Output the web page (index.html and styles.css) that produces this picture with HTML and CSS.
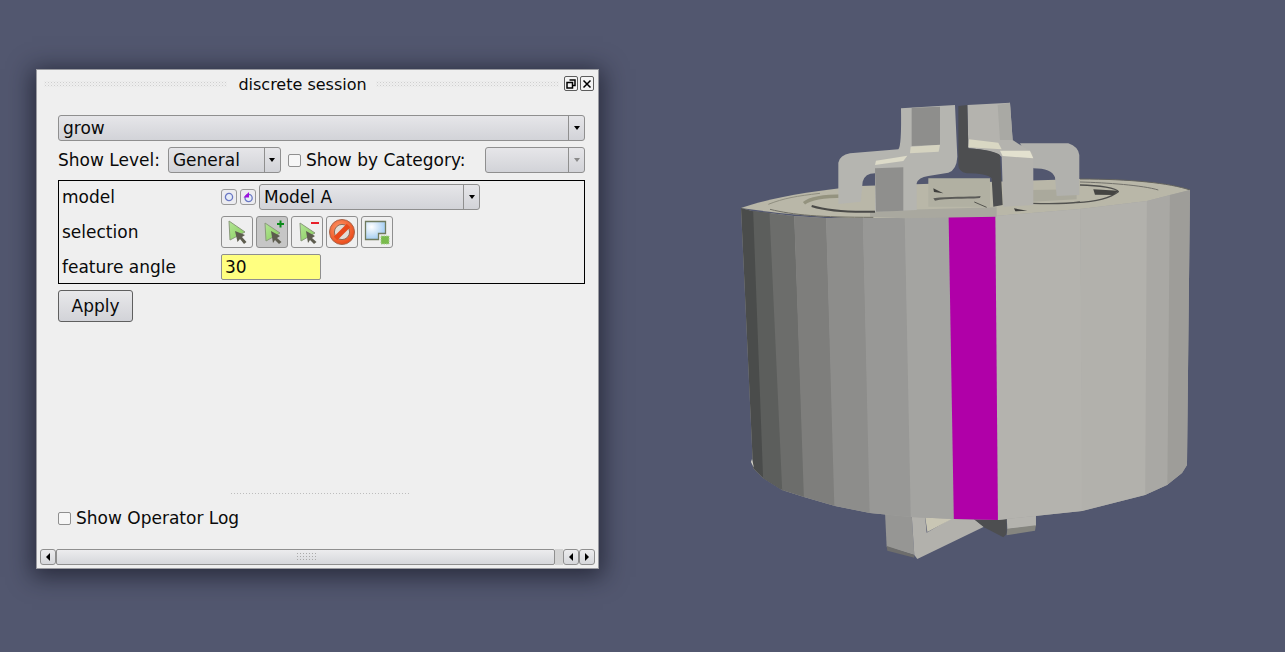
FILE: index.html
```html
<!DOCTYPE html>
<html lang="en">
<head>
<meta charset="utf-8">
<title>discrete session</title>
<link rel="stylesheet" href="styles.css">
</head>
<body>
<svg class="scene" viewBox="0 0 1285 652" xmlns="http://www.w3.org/2000/svg" aria-hidden="true">
  <defs>
    <clipPath id="bodyclip">
      <path d="M741 208L752 211L769 213L794 216L825 218L862 218L904 218L948 217L995 216L1080 209L1147 201L1170 195L1190 190L1187 465L1182 473L1167 485L1145 495L1082 511L998 520L954 519L911 517L870 513L835 506L804 497L782 490L763 478L753 468Z"/>
    </clipPath>
  </defs>
  <!-- feet below the body (coordinates in 3x crop space) -->
  <g transform="translate(730 440) scale(.3333)">
    <path d="M465 215L545 222L553 345L470 320Z" fill="#969694"/>
    <path d="M470 318L553 345V353L472 332Z" fill="#6d6d6c"/>
    <path d="M545 222L585 225L590 278L670 232H725L762 260L562 357L553 345Z" fill="#b2b1ac"/>
    <path d="M585 225L675 232L592 276Z" fill="#c9c6b4"/>
    <path d="M725 232L830 225V282L820 292L762 262Z" fill="#4d4e50"/>
    <path d="M830 225L918 220V258L832 268Z" fill="#b4b3ae"/>
    <path d="M832 266L918 256L915 272L830 286Z" fill="#85857f"/>
  </g>
  <!-- top face -->
  <path d="M741 208C770 198 810 191 860 186L1080 179C1130 179 1170 183 1190 190C1160 204 1090 214 995 217L900 219C840 219 780 214 741 208Z" fill="#b9b7a8"/>
  <path d="M1080 179C1130 179 1170 183 1190 190" fill="none" stroke="#62625e"/>
  <!-- facets -->
  <g clip-path="url(#bodyclip)">
    <path d="M700 180H1200V540H700Z" fill="#a3a3a0"/>
    <path d="M730 180H769L782 530H742Z" fill="#4a4c4b"/>
    <path d="M752 180H769L786 530H765Z" fill="#5c5e5c"/>
    <path d="M768 180H793L806 530H784Z" fill="#6c6d6b"/>
    <path d="M793 180H825L836 530H805Z" fill="#7e7e7c"/>
    <path d="M825 180H862L871 530H835Z" fill="#8d8d8b"/>
    <path d="M862 180H904L912 530H870Z" fill="#989896"/>
    <path d="M904 180H950L955 530H911Z" fill="#a4a4a1"/>
    <path d="M995 180H1080L1083 530H998Z" fill="#b4b3ae"/>
    <path d="M1080 180H1148L1146 530H1082Z" fill="#b2b1ac"/>
    <path d="M1147 180H1171L1168 530H1145Z" fill="#a9a8a4"/>
    <path d="M1170 180H1200L1197 530H1167Z" fill="#9e9d99"/>
    <path d="M948 180H995L998 530H954Z" fill="#b000a8"/>
  </g>
  <path d="M752 459L754 468L751 462Z" fill="#d8d6c8"/>
  <!-- rings on the top face (coordinates in 3x crop space) -->
  <g transform="translate(730 170) scale(.3333)" fill="none">
    <path d="M420 122L800 112L800 140L520 145L420 140Z" fill="#a9a89f"/>
    <path d="M115 103C160 85 200 78 270 70" stroke="#8f8e80" stroke-width="3"/>
    <path d="M120 118C190 135 270 142 430 142" stroke="#6e6d64" stroke-width="3"/>
    <path d="M222 100C240 85 290 78 340 78" stroke="#94937f" stroke-width="10"/>
    <path d="M245 108C290 122 360 127 435 125" stroke="#4a4a48" stroke-width="6"/>
    <path d="M1050 36C1130 38 1240 46 1285 60" stroke="#71706a" stroke-width="3"/>
    <path d="M1050 45C1110 46 1160 55 1165 65C1140 85 1090 95 1040 98" stroke="#4f4f4d" stroke-width="4"/>
    <path d="M1090 58L1165 62L1150 75L1095 74Z" fill="#444442"/>
    <path d="M905 100C960 102 1020 100 1050 96" stroke="#52524f" stroke-width="4"/>
    <path d="M905 60L1040 58L1040 88L905 95Z" fill="#aaa99c"/>
    <path d="M595 25H780V110H595Z" fill="#b1b0a2"/>
    <path d="M610 55L640 70L612 66Z" fill="#3f3f3d"/>
    <path d="M610 85C660 78 710 82 752 78L750 84C700 88 650 84 615 92Z" fill="#5b5b58"/>
    <path d="M733 96L770 112" stroke="#54544f" stroke-width="3"/>
    <path d="M852 115L892 122L856 124Z" fill="#3f3f3d"/>
  </g>
  <!-- prongs (coordinates in 3x crop space) -->
  <g transform="translate(820 90) scale(.3333)">
    <path d="M600 160H745Q775 170 778 195V315L710 318L705 262Q695 235 640 235Z" fill="#b1b1ad"/>
    <path d="M55 342V218Q60 195 90 190L235 178Q245 170 243 55L405 45L412 200Q410 240 385 248L325 258Q295 262 290 280V360L165 365V250Q135 250 128 275L122 335Z" fill="#b5b5b0"/>
    <path d="M275 53L360 50V165L275 168Z" fill="#8e8e8c"/>
    <path d="M272 170L360 164L356 185L270 190Z" fill="#d5d3c0"/>
    <path d="M165 235L250 232V362L168 365Z" fill="#8f8f8d"/>
    <path d="M168 212L262 197L250 213L165 225Z" fill="#dcdac8"/>
    <path d="M442 45L570 38L578 150L640 190V345L550 350L545 200Q520 180 445 175Z" fill="#b4b3ae"/>
    <path d="M533 45L570 38L578 150H540Z" fill="#a9a9a4"/>
    <path d="M415 48L442 45L445 175Q520 180 540 195L548 345L520 350L515 265Q500 250 440 250Q415 245 415 225Z" fill="#4d4e50"/>
    <path d="M447 148L535 158L545 178L445 172Z" fill="#d9d7c3"/>
    <path d="M540 182L630 182L640 205L548 198Z" fill="#e3e1cf"/>
  </g>
</svg>

<section class="window">
  <header class="titlebar">
    <span class="grip"></span>
    <span class="title">discrete session</span>
    <span class="grip"></span>
    <span class="title-buttons">
      <span class="title-btn">
        <svg width="10" height="10" viewBox="0 0 10 10"><path d="M3.500 1H9V6.500H7M1 3.500H6.500V9H1Z" fill="none" stroke="#000" stroke-width="1.500"/></svg>
      </span>
      <span class="title-btn">
        <svg width="10" height="10" viewBox="0 0 10 10"><path d="M1.500 1.500L8.500 8.500M8.500 1.500L1.500 8.500" fill="none" stroke="#000" stroke-width="1.500"/></svg>
      </span>
    </span>
  </header>

  <div class="body">
    <div class="combo combo-full"><span class="combo-text">grow</span><span class="combo-arrow"><i class="down"></i></span></div>

    <div class="level-row">
      <span>Show Level:</span>
      <div class="combo combo-level"><span class="combo-text">General</span><span class="combo-arrow"><i class="down"></i></span></div>
      <span class="check-label"><span class="checkbox"></span>Show by Category:</span>
      <div class="combo combo-cat"><span class="combo-text"></span><span class="combo-arrow"><i class="down muted"></i></span></div>
    </div>

    <div class="params">
      <div class="param-row row-model">
        <span class="param-label">model</span>
        <span class="mini-btn">
          <svg width="12" height="12" viewBox="0 0 12 12"><circle cx="6" cy="6" r="3.600" fill="#e6ecf8" stroke="#6a78c4" stroke-width="1.300"/></svg>
        </span>
        <span class="mini-btn">
          <svg width="12" height="12" viewBox="0 0 12 12"><circle cx="6.600" cy="7" r="3.600" fill="#e6ecf8" stroke="#6a78c4" stroke-width="1.300"/><path d="M1.500 6.500L7 1V6.500Z" fill="#a010e0"/></svg>
        </span>
        <div class="combo combo-model"><span class="combo-text">Model A</span><span class="combo-arrow"><i class="down"></i></span></div>
      </div>

      <div class="param-row row-selection">
        <span class="param-label">selection</span>
        <span class="tool-btn">
          <svg width="24" height="24" viewBox="0 0 24 24"><defs><linearGradient id="greenfill" x1="0" y1="0" x2="1" y2="1"><stop offset="0" stop-color="#b4e696"/><stop offset="1" stop-color="#86cc5c"/></linearGradient></defs><path d="M4 1L20 12L5 20Z" fill="url(#greenfill)" stroke="#8b9a7c"/><path d="M10 11L20 15L17 17L21.500 22L19 24L15 19L12.500 22Z" fill="#5d5c4e"/></svg>
        </span>
        <span class="tool-btn is-on">
          <svg width="24" height="24" viewBox="0 0 24 24"><path d="M5 3L20 13L6 21Z" fill="url(#greenfill)" stroke="#8b9a7c"/><path d="M11 11L20 16L17 18L21.500 22L19 24L15 20L13 23Z" fill="#5d5c4e"/><path d="M17 4H24M20.500 .5V7.500" stroke="#0a8a1a" stroke-width="2"/></svg>
        </span>
        <span class="tool-btn">
          <svg width="24" height="24" viewBox="0 0 24 24"><path d="M5 3L20 13L6 21Z" fill="url(#greenfill)" stroke="#8b9a7c"/><path d="M11 11L20 16L17 18L21.500 22L19 24L15 20L13 23Z" fill="#5d5c4e"/><path d="M16 3H24" stroke="#e8202a" stroke-width="2"/></svg>
        </span>
        <span class="tool-btn">
          <svg width="26" height="26" viewBox="0 0 26 26"><defs><radialGradient id="stopfill" cx=".4" cy=".35" r=".75"><stop offset="0" stop-color="#ff9a6a"/><stop offset="1" stop-color="#e8400f"/></radialGradient></defs><circle cx="13" cy="13" r="12.500" fill="url(#stopfill)" stroke="#a8654a"/><circle cx="13" cy="13" r="7.600" fill="#e2ddd6" stroke="#8c6a58"/><path d="M6.500 19.500L19.500 6.500" stroke="#e8481a" stroke-width="5"/></svg>
        </span>
        <span class="tool-btn">
          <svg width="26" height="26" viewBox="0 0 26 26"><defs><radialGradient id="boxfill" cx=".3" cy=".3" r=".9"><stop offset="0" stop-color="#fff"/><stop offset="1" stop-color="#8cc0ee"/></radialGradient></defs><path d="M1.500 2.500H21.500V14.500H14.500V20.500H1.500Z" fill="url(#boxfill)" stroke="#6f7a5e" stroke-width="1.300"/><rect x="17" y="17" width="8" height="8" fill="#79bb4c" stroke="#a8cf90" stroke-dasharray="1.500 1"/></svg>
        </span>
      </div>

      <div class="param-row row-angle">
        <span class="param-label">feature angle</span>
        <span class="field">30</span>
      </div>
    </div>

    <button class="apply" type="button">Apply</button>

    <div class="spacer"></div>
    <div class="splitter"></div>

    <label class="check-label log-row"><span class="checkbox"></span>Show Operator Log</label>
  </div>

  <div class="scrollbar">
    <span class="sb-btn"><i class="left"></i></span>
    <span class="sb-track"><span class="sb-dots"></span></span>
    <span class="sb-gap"></span>
    <span class="sb-btn"><i class="left"></i></span>
    <span class="sb-btn"><i class="right"></i></span>
  </div>
</section>
</body>
</html>
```
FILE: styles.css
```css
html, body {
  margin: 0;
  height: 100%;
  overflow: hidden;
  background: #52576f;
}

body {
  position: relative;
  font-family: "DejaVu Sans", sans-serif;
  font-size: 16px;
  color: #0a0a0a;
}

.scene {
  position: absolute;
  left: 0;
  top: 0;
  width: 1285px;
  height: 652px;
}

.window {
  position: absolute;
  left: 36px;
  top: 69px;
  width: 561px;
  height: 498px;
  display: flex;
  flex-direction: column;
  background: #efefef;
  border: 1px solid #9a9ba1;
  box-shadow: 0 4px 22px 4px rgba(20, 22, 35, .66);
}

.titlebar {
  height: 29px;
  padding: 0 4px 0 7px;
  display: flex;
  align-items: center;
  flex: none;
}

.title {
  font-size: 16px;
  padding: 0 9px 0 11px;
  white-space: nowrap;
}

.grip {
  flex: 1;
  height: 6px;
  margin-top: -1px;
  background-image:
    radial-gradient(circle, #cfcfcf .8px, transparent 1px),
    radial-gradient(circle, #dadada .8px, transparent 1px);
  background-size: 3px 3px;
  background-position: 0 0, 1.5px 1.5px;
}

.title-buttons {
  display: flex;
  gap: 2px;
  margin-left: 5px;
  margin-top: -2px;
}

.title-btn {
  width: 12px;
  height: 13px;
  border: 1px solid #5c5c5c;
  border-radius: 2px;
  background: #f4f4f4;
  display: flex;
  align-items: center;
  justify-content: center;
}

.body {
  flex: 1;
  display: flex;
  flex-direction: column;
  padding: 16px 13px 0 21px;
  min-height: 0;
}

.combo {
  display: flex;
  height: 24px;
  border: 1px solid #8f8f8f;
  border-radius: 3px;
  background: linear-gradient(#e6e6e9, #d2d3d8);
  flex: none;
}

.combo-text {
  flex: 1;
  padding-left: 4px;
  line-height: 24px;
  font-size: 17px;
  white-space: nowrap;
}

.combo-arrow {
  width: 15px;
  border-left: 1px solid #8f8f8f;
  display: flex;
  align-items: center;
  justify-content: center;
}

.down {
  width: 0;
  height: 0;
  border-left: 3px solid transparent;
  border-right: 3px solid transparent;
  border-top: 4px solid #000;
}

.down.muted {
  border-top-color: #8a8a8a;
}

.level-row {
  display: flex;
  align-items: center;
  margin-top: 6px;
  height: 26px;
  white-space: nowrap;
  font-size: 17px;
}

.combo-level {
  width: 111px;
  margin-left: 8px;
}

.combo-level + .check-label {
  margin-left: 7px;
}

.check-label {
  display: flex;
  align-items: center;
  gap: 5px;
  font-size: 17px;
}

.checkbox {
  width: 11px;
  height: 11px;
  border: 1px solid #8f8f8f;
  border-radius: 2px;
  background: #f6f6f6;
  flex: none;
}

.combo-cat {
  width: 98px;
  margin-left: auto;
}

.params {
  margin-top: 7px;
  height: 104px;
  border: 1px solid #000;
  padding: 0 3px;
  box-sizing: border-box;
  display: flex;
  flex-direction: column;
}

.param-row {
  display: flex;
  align-items: center;
  gap: 3px;
}

.row-model { height: 32px; }
.row-selection { height: 38px; }
.row-angle { height: 32px; }

.param-label {
  width: 153px;
  margin-right: 3px;
  flex: none;
  font-size: 17px;
}

.mini-btn {
  width: 14px;
  height: 14px;
  border: 1px solid #9a9a9a;
  border-radius: 3px;
  background: #ececf0;
  display: flex;
  align-items: center;
  justify-content: center;
}

.combo-model {
  width: 219px;
}

.tool-btn {
  width: 30px;
  height: 30px;
  border: 1px solid #8f8f8f;
  border-radius: 3px;
  background: #efefef;
  display: flex;
  align-items: center;
  justify-content: center;
}

.tool-btn.is-on {
  background: #c6c6c6;
}

.field {
  width: 95px;
  height: 24px;
  padding-left: 3px;
  line-height: 25px;
  border: 1px solid #8f8f8f;
  border-radius: 2px;
  background: #ffff80;
  font-size: 17px;
}

.apply {
  margin-top: 6px;
  width: 75px;
  height: 32px;
  flex: none;
  padding: 0;
  border: 1px solid #5f5f5f;
  border-radius: 3px;
  background: linear-gradient(#e8e8ea, #d2d3d8);
  font: 17px "DejaVu Sans", sans-serif;
  color: #0a0a0a;
}

.spacer {
  flex: 1;
}

.splitter {
  width: 180px;
  height: 3px;
  margin: 0 0 12px 172px;
  background-image: radial-gradient(circle, #bdbdbd .8px, transparent 1px);
  background-size: 3px 3px;
}

.log-row {
  height: 22px;
  margin-bottom: 20px;
}

.scrollbar {
  display: flex;
  height: 16px;
  margin: 0 3px 3px 3px;
  flex: none;
}

.sb-btn {
  width: 14px;
  border: 1px solid #8f8f8f;
  border-radius: 3px;
  background: linear-gradient(#ececee, #d6d7db);
  display: flex;
  align-items: center;
  justify-content: center;
}

.sb-track {
  flex: 1;
  border: 1px solid #8f8f8f;
  border-radius: 2px;
  background: linear-gradient(#ececee, #d6d7db);
  display: flex;
  align-items: center;
  justify-content: center;
}

.sb-dots {
  width: 20px;
  height: 10px;
  background-image: radial-gradient(circle, #aaaaaa .7px, transparent .9px);
  background-size: 3px 3px;
}

.sb-gap {
  width: 8px;
  background-image: radial-gradient(circle, #d4d4d4 .7px, transparent .9px);
  background-size: 2px 2px;
}

.left,
.right {
  width: 0;
  height: 0;
  border-top: 4px solid transparent;
  border-bottom: 4px solid transparent;
}

.left { border-right: 4px solid #000; }
.right { border-left: 4px solid #000; }
```
